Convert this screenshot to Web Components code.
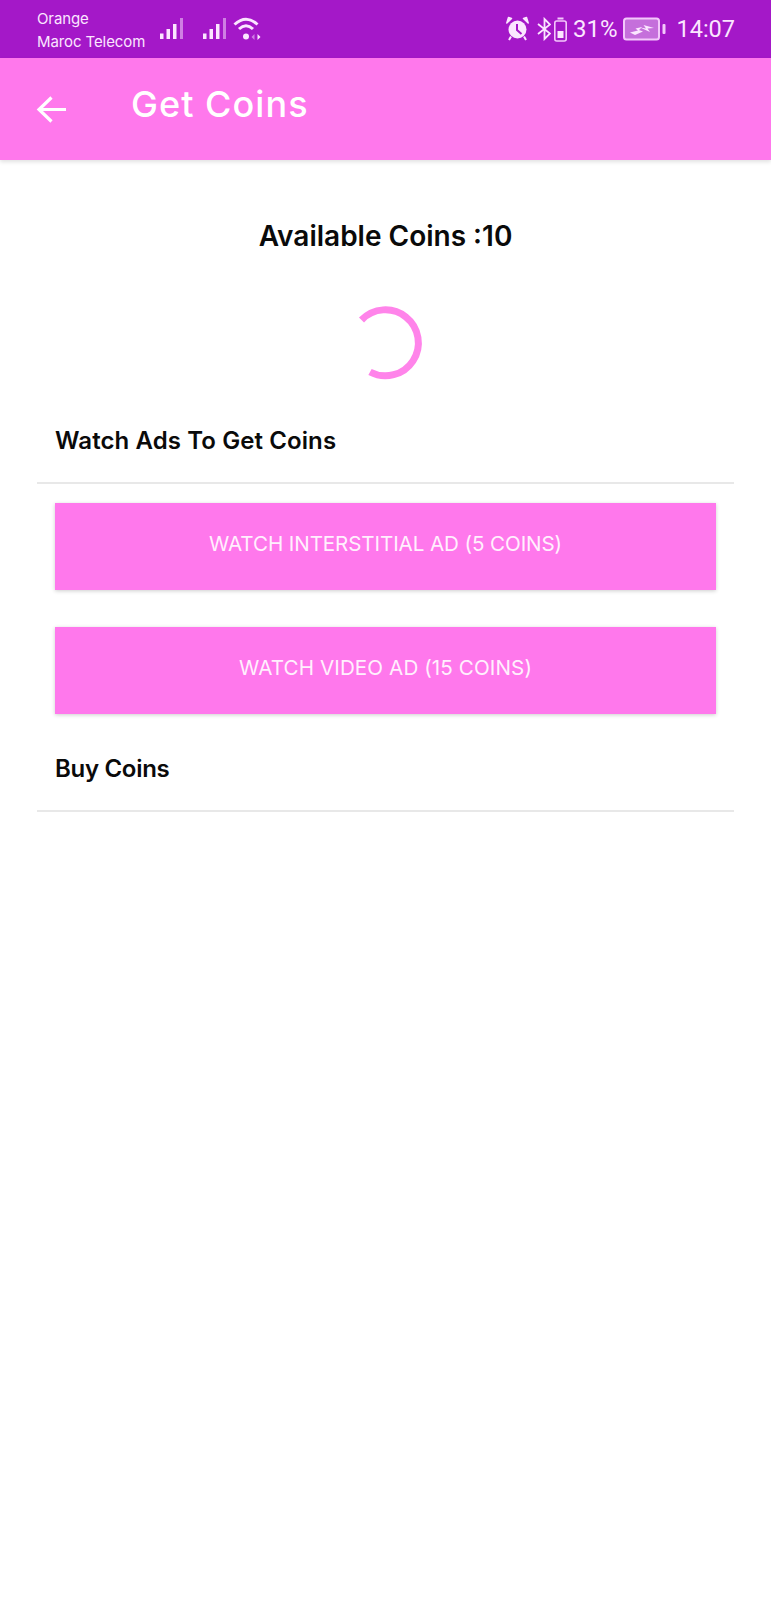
<!DOCTYPE html>
<html>
<head>
<meta charset="utf-8">
<title>Get Coins</title>
<style>
  html, body { margin: 0; background: #fff; }
  body { font-family: "Inter", "Noto Sans", sans-serif; }
</style>
</head>
<body>
<coin-screen>
  <status-bar></status-bar>
  <app-bar title="Get Coins"></app-bar>
  <coins-header coins="10"></coins-header>
  <section-title>Watch Ads To Get Coins</section-title>
  <ad-button>WATCH INTERSTITIAL AD (5 COINS)</ad-button>
  <ad-button style="--btn-spacing: 0.1px">WATCH VIDEO AD (15 COINS)</ad-button>
  <section-title class="buy">Buy Coins</section-title>
</coin-screen>

<script>
class CoinScreen extends HTMLElement {
  constructor() {
    super();
    this.attachShadow({ mode: 'open' });
    this.shadowRoot.innerHTML = `
      <style>
        :host { display: flex; flex-direction: column; height: 1600px; background: #fff; overflow: hidden; }
      </style>
      <slot></slot>
    `;
  }
}

class StatusBar extends HTMLElement {
  constructor() {
    super();
    this.attachShadow({ mode: 'open' });
    const signal = `
      <svg width="24" height="24" viewBox="0 0 24 24">
        <rect x="0" y="16.500" width="3.500" height="5.500" fill="#fbe6ff"/>
        <rect x="6.500" y="12" width="3.500" height="10" fill="#fbe6ff"/>
        <rect x="13" y="7" width="3.500" height="15" fill="#fbe6ff"/>
        <rect x="20" y="1" width="3" height="21" fill="#cf7fe3"/>
      </svg>`;
    this.shadowRoot.innerHTML = `
      <style>
        :host { display: flex; align-items: center; height: 58px; background: #a418c8; color: #fbe6ff; flex: none; }
        .carrier { margin-left: 37px; width: 123px; font: 400 15px/23px "Inter", sans-serif; padding-top: 1px; white-space: nowrap; letter-spacing: -0.1px; }
        .signals { display: flex; align-items: center; }
        .signals svg { display: block; }
        .sig2 { margin-left: 19px; }
        .wifi { margin-left: 5px; }
        .right { margin-left: auto; margin-right: 36px; display: flex; align-items: center; }
        .bt { margin-left: 8px; }
        .batt { margin-left: 3px; }
        .pct { font: 400 24px/28px "Roboto", sans-serif; margin-left: 6px; }
        .charge { margin-left: 6px; }
        .time { font: 400 23.5px/28px "Roboto", sans-serif; margin-left: 10px; }
      </style>
      <div class="carrier">Orange<br>Maroc Telecom</div>
      <div class="signals">
        <span class="sig1">${signal}</span>
        <span class="sig2">${signal}</span>
        <svg class="wifi" width="30" height="24" viewBox="0 0 30 24" fill="none" stroke="#fbe6ff">
          <path d="M2.500 7.500 Q14 -3 25.500 7.500" stroke-width="3"/>
          <path d="M7 12 Q14 5.500 21 12" stroke-width="3"/>
          <circle cx="14" cy="19.500" r="3" fill="#fbe6ff" stroke="none"/>
          <path d="M22.500 17 L19.500 20 L22.500 23 Z" fill="#cf7fe3" stroke="none"/>
          <path d="M25.500 17 L28.500 20 L25.500 23 Z" fill="#fbe6ff" stroke="none"/>
        </svg>
      </div>
      <div class="right">
        <svg width="23" height="26" viewBox="0 0 23 26">
          <circle cx="11.500" cy="13.500" r="9" fill="#fbe6ff"/>
          <path d="M11 8 V14 L15.500 18" fill="none" stroke="#a418c8" stroke-width="2"/>
          <path d="M0.800 7 L5.500 2.500 L2.500 1.500 Z M22.200 7 L17.500 2.500 L20.500 1.500 Z" fill="#fbe6ff" stroke="#fbe6ff" stroke-width="1.500" stroke-linejoin="round"/>
          <path d="M5 20.500 L3 24 M18 20.500 L20 24" stroke="#fbe6ff" stroke-width="2"/>
        </svg>
        <svg class="bt" width="14" height="24" viewBox="0 0 14 24" fill="none" stroke="#fbe6ff" stroke-width="1.800">
          <path d="M1 7 L13 16.500 L7.500 22 V2 L13 7.500 L1 17"/>
        </svg>
        <svg class="batt" width="13" height="26" viewBox="0 0 13 26">
          <rect x="0.800" y="5" width="11.400" height="20" rx="2" fill="none" stroke="#f3c8fb" stroke-width="1.600"/>
          <rect x="3.500" y="1.500" width="6" height="2" fill="#f3c8fb"/>
          <rect x="3.500" y="15" width="6" height="7" fill="#fbe6ff"/>
        </svg>
        <span class="pct">31%</span>
        <svg class="charge" width="43" height="24" viewBox="0 0 43 24">
          <rect x="1" y="1.500" width="35" height="21" rx="2.500" fill="#c56fdb" stroke="#f3c8fb" stroke-width="2"/>
          <rect x="39.500" y="7" width="3" height="10" rx="1" fill="#f3c8fb"/>
          <path d="M7 15.500 L15 13.500 L12.500 11.500 L19 10 L16 13 L20 14.500 L12 18 Z" fill="#fbe6ff"/>
          <path d="M17 10.500 L23 11.500 L20.500 8 L31 11 L24.500 11.500 L27 15 Z" fill="#fbe6ff"/>
        </svg>
        <span class="time">14:07</span>
      </div>
    `;
  }
}

class AppBar extends HTMLElement {
  constructor() {
    super();
    this.attachShadow({ mode: 'open' });
    this.shadowRoot.innerHTML = `
      <style>
        :host { display: flex; align-items: center; height: 102px; flex: none; background: #ff78ec; color: #fff; box-shadow: 0 2px 4px rgba(0,0,0,.12); position: relative; }
        svg { margin-left: 36px; display: block; flex: none; }
        h1 { margin: -10px 0 0 64px; font: 500 36px/42px "Inter", sans-serif; letter-spacing: 1.050px; }
      </style>
      <svg width="31" height="30" viewBox="0 0 31 30" fill="none" stroke="#fff" stroke-width="3.200">
        <path d="M30 15.500 H3 M15.500 3.500 L3 15.500 L15.500 27.500"/>
      </svg>
      <h1></h1>
    `;
    this.shadowRoot.querySelector('h1').textContent = this.getAttribute('title');
  }
}

class CoinsHeader extends HTMLElement {
  constructor() {
    super();
    this.attachShadow({ mode: 'open' });
    const coins = this.getAttribute('coins');
    this.shadowRoot.innerHTML = `
      <style>
        :host { display: flex; flex-direction: column; align-items: center; flex: none; padding-top: 58px; }
        h2 { margin: 0; font: 600 28px/36px "Inter", sans-serif; color: #0a0a0a; }
        svg { display: block; margin-top: 48px; }
      </style>
      <h2>Available Coins :${coins}</h2>
      <svg width="80" height="80" viewBox="0 0 80 80" fill="none">
        <path d="M15.500 18 A33 33 0 1 1 24 70" stroke="#ff84ea" stroke-width="7"/>
      </svg>
    `;
  }
}

class SectionTitle extends HTMLElement {
  constructor() {
    super();
    this.attachShadow({ mode: 'open' });
    this.shadowRoot.innerHTML = `
      <style>
        :host { display: block; flex: none; margin: 40px 37px 0; border-bottom: 2px solid #e8e8e8; padding: 1px 0 23px 18px; color: #0a0a0a; font: 600 24px/36px "Inter", sans-serif; letter-spacing: 0.100px; }
        :host(.buy) { margin-top: 18px; letter-spacing: -0.300px; }
      </style>
      <slot></slot>
    `;
  }
}

class AdButton extends HTMLElement {
  constructor() {
    super();
    this.attachShadow({ mode: 'open' });
    this.shadowRoot.innerHTML = `
      <style>
        :host { display: block; flex: none; margin: 19px 55px 18px; }
        button { display: flex; align-items: center; justify-content: center; width: 100%; height: 87px; padding: 0 0 6px; border: 0; border-radius: 0; background: #ff78ec; color: #fff0fd; font: 400 20.600px/30px "Inter", sans-serif; letter-spacing: var(--btn-spacing, -0.100px); box-shadow: 0 1px 4px rgba(0,0,0,.2); }
      </style>
      <button><slot></slot></button>
    `;
  }
}

customElements.define('coin-screen', CoinScreen);
customElements.define('status-bar', StatusBar);
customElements.define('app-bar', AppBar);
customElements.define('coins-header', CoinsHeader);
customElements.define('section-title', SectionTitle);
customElements.define('ad-button', AdButton);
</script>
</body>
</html>
